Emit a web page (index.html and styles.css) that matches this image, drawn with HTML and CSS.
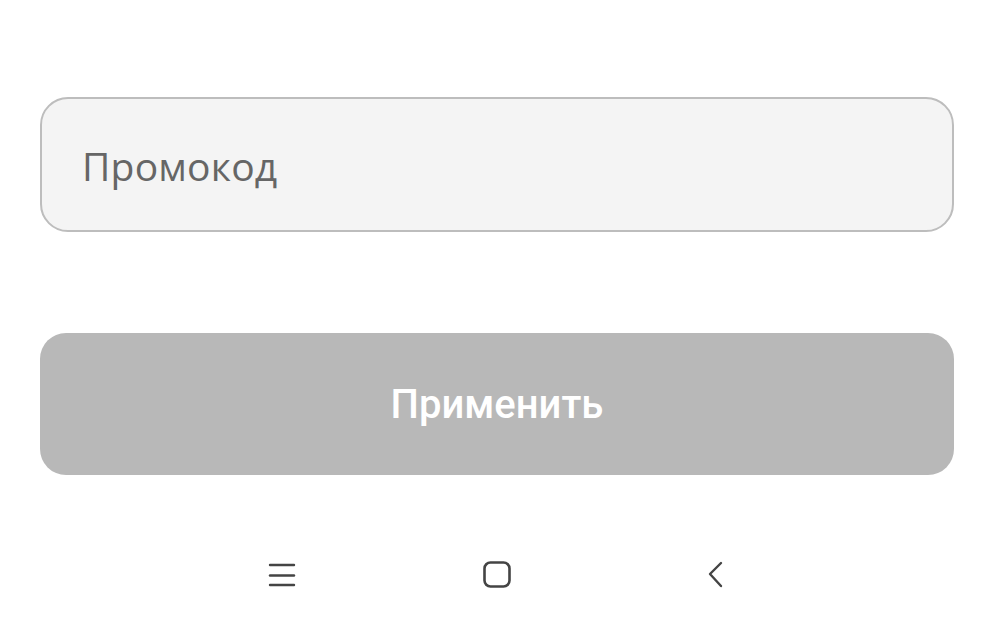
FILE: index.html
```html
<!DOCTYPE html>
<html lang="ru">
<head>
<meta charset="utf-8">
<link rel="stylesheet" href="styles.css">
</head>
<body>
<main class="sheet">
  <div class="field"><span class="placeholder">Промокод</span></div>
  <button class="apply">Применить</button>
</main>
<nav class="navbar">
  <svg class="nav-icon" width="28" height="28" viewBox="0 0 28 28"><g stroke="#444" stroke-width="2.4" stroke-linecap="round"><line x1="2" y1="4" x2="26" y2="4"/><line x1="2" y1="14.5" x2="26" y2="14.5"/><line x1="2" y1="24" x2="26" y2="24"/></g></svg>
  <svg class="nav-icon" width="30" height="30" viewBox="0 0 30 30"><rect x="2.5" y="2.5" width="25" height="24" rx="6" fill="none" stroke="#444" stroke-width="2.6"/></svg>
  <svg class="nav-icon" width="20" height="30" viewBox="0 0 20 30"><polyline points="15,3 4,14 15,26" fill="none" stroke="#444" stroke-width="2.4" stroke-linecap="round" stroke-linejoin="round"/></svg>
</nav>
</body>
</html>
```
FILE: styles.css
```css
html, body {
  margin: 0;
  padding: 0;
  background: #ffffff;
}
body {
  width: 994px;
  height: 635px;
  overflow: hidden;
  font-family: "Open Sans", "Noto Sans", sans-serif;
}
.sheet {
  padding: 97px 40px 0 40px;
  display: flex;
  flex-direction: column;
  gap: 101px;
}
.field {
  box-sizing: border-box;
  height: 135px;
  border: 2px solid #bdbdbd;
  border-radius: 28px;
  background: #f4f4f4;
  display: flex;
  align-items: center;
  padding-left: 40px;
}
.placeholder {
  font-size: 39px;
  color: #666666;
  letter-spacing: 0.2px;
  margin-top: 2px;
}
.apply {
  height: 142px;
  border: none;
  border-radius: 26px;
  background: #b8b8b8;
  color: #ffffff;
  font-family: Roboto, sans-serif;
  font-weight: 500;
  font-size: 40px;
  padding: 0;
  margin: 0;
}
.navbar {
  display: flex;
  justify-content: center;
  align-items: center;
  margin-top: 82px;
  height: 36px;
}
.nav-icon {
  display: block;
}
.nav-icon:nth-child(1) { margin-right: 186px; }
.nav-icon:nth-child(2) { margin-right: 194px; }
```
